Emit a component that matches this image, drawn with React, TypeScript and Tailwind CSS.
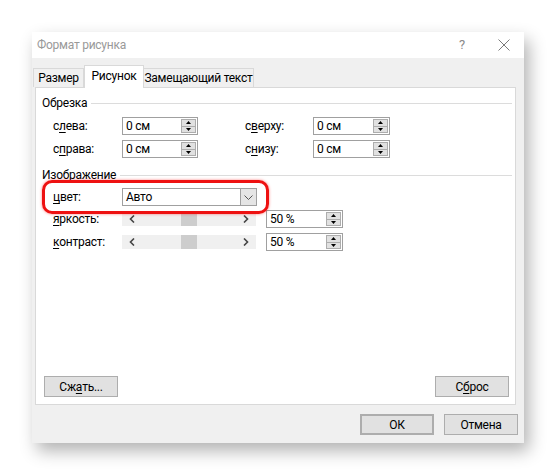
import React from "react";

const U = ({ children }: { children: React.ReactNode }) => (
  <span className="underline underline-offset-2">{children}</span>
);

function Spin({ value, w }: { value: string; w: string }) {
  return (
    <div className={`flex h-[18px] ${w} border border-[#a0a0a0] bg-white`}>
      <div className="flex-1 pl-[3px] leading-[16px] text-[12px] text-black">{value}</div>
      <div className="flex w-[16px] flex-col bg-white py-[1px] pr-[1px]">
        <div className="flex flex-1 items-center justify-center border border-[#adadad] bg-[#e1e1e1]">
          <svg width="5" height="3" viewBox="0 0 5 3"><path d="M2.5 0L5 3H0z" fill="#000" /></svg>
        </div>
        <div className="flex flex-1 items-center justify-center border border-t-0 border-[#adadad] bg-[#e1e1e1]">
          <svg width="5" height="3" viewBox="0 0 5 3"><path d="M0 0h5L2.5 3z" fill="#000" /></svg>
        </div>
      </div>
    </div>
  );
}

function Slider() {
  return (
    <div className="flex h-[14px] w-[134px] items-center bg-[#f0f0f0]">
      <div className="flex w-[20px] justify-center">
        <svg width="6" height="8" viewBox="0 0 6 8"><path d="M5 0.5L1.5 4L5 7.5" stroke="#444" strokeWidth="1.6" fill="none" /></svg>
      </div>
      <div className="flex-1" />
      <div className="h-[14px] w-[16px] bg-[#cdcdcd]" />
      <div className="flex-1" />
      <div className="flex w-[20px] justify-center">
        <svg width="6" height="8" viewBox="0 0 6 8"><path d="M1 0.5L4.5 4L1 7.5" stroke="#444" strokeWidth="1.6" fill="none" /></svg>
      </div>
    </div>
  );
}

function Btn({ children, className = "" }: { children: React.ReactNode; className?: string }) {
  return (
    <div className={`flex h-[21px] w-[74px] items-center justify-center border-[#adadad] bg-[#e1e1e1] text-[12px] text-black ${className}`}>
      {children}
    </div>
  );
}

export default function App() {
  return (
    <div
      className="h-[475px] w-[556px] whitespace-nowrap bg-white pl-[32px] pt-[32px] tracking-[-0.25px]"
      style={{ fontFamily: 'Roboto, "Noto Sans", sans-serif' }}
    >
      <div className="flex h-[411px] w-[492px] flex-col bg-[#f0f0f0] shadow-[5px_8px_16px_rgba(0,0,0,0.3)]">
        {/* title bar */}
        <div className="flex h-[26px] items-center bg-white pl-[5px] pr-[14px] text-[12px] text-[#999999]">
          <div className="flex-1">Формат рисунка</div>
          <div className="mr-[33px] text-[13px] text-[#8a8a8a]">?</div>
          <svg width="12" height="12" viewBox="0 0 12 12"><path d="M0.5 0.5L11.5 11.5M11.5 0.5L0.5 11.5" stroke="#7a7a7a" strokeWidth="1" /></svg>
        </div>
        {/* tabs */}
        <div className="mt-[7px] flex h-[22px] items-end pl-[1px]">
          <div className="flex h-[19px] w-[51px] items-center justify-center border border-b-0 border-[#d9d9d9] bg-[#f0f0f0] text-[12px] text-black">Размер</div>
          <div className="relative z-10 -mb-[1px] flex h-[23px] w-[60px] items-center justify-center border border-b-0 border-[#d9d9d9] bg-white pb-[2px] text-[12px] text-black">Рисунок</div>
          <div className="flex h-[19px] w-[110px] items-center justify-center border border-b-0 border-l-0 border-[#d9d9d9] bg-[#f0f0f0] text-[12px] text-black">Замещающий текст</div>
        </div>
        {/* panel */}
        <div className="relative ml-[3px] flex h-[318px] w-[481px] flex-col border border-[#d9d9d9] bg-white text-[12px] text-black">
          <div className="mt-[6px] flex h-[18px] items-center pl-[6px] pr-[3px]">
            <span>Обрезка</span>
            <div className="ml-[4px] h-px flex-1 bg-[#dcdcdc]" />
          </div>
          <div className="mt-[5px] flex flex-col gap-[5px] pl-[17px]">
            <div className="flex items-center">
              <div className="w-[69px]">с<U>л</U>ева:</div>
              <Spin value="0 см" w="w-[76px]" />
              <div className="ml-[47px] w-[68px]">с<U>в</U>ерху:</div>
              <Spin value="0 см" w="w-[77px]" />
            </div>
            <div className="flex items-center">
              <div className="w-[69px]">с<U>п</U>рава:</div>
              <Spin value="0 см" w="w-[76px]" />
              <div className="ml-[47px] w-[68px]">с<U>н</U>изу:</div>
              <Spin value="0 см" w="w-[77px]" />
            </div>
          </div>
          <div className="mt-[8px] flex h-[18px] items-center pl-[6px] pr-[3px]">
            <span>Изображение</span>
            <div className="ml-[4px] h-px flex-1 bg-[#dcdcdc]" />
          </div>
          <div className="mt-[4px] flex flex-col pl-[17px]">
            <div className="flex items-center">
              <div className="w-[69px]"><U>ц</U>вет:</div>
              <div className="flex h-[18px] w-[135px] border border-[#a0a0a0] bg-white">
                <div className="flex-1 pl-[3px] leading-[16px]">Авто</div>
                <div className="flex w-[16px] items-center justify-center border-l border-[#a0a0a0] bg-[#e5e5e5]">
                  <svg width="9" height="5" viewBox="0 0 9 5"><path d="M0.5 0.5L4.5 4.5L8.5 0.5" stroke="#555" strokeWidth="1" fill="none" /></svg>
                </div>
              </div>
            </div>
            <div className="mt-[4px] flex items-center">
              <div className="w-[69px]"><U>я</U>ркость:</div>
              <Slider />
              <div className="ml-[10px]"><Spin value="50 %" w="w-[77px]" /></div>
            </div>
            <div className="mt-[5px] flex items-center">
              <div className="w-[69px]"><U>к</U>онтраст:</div>
              <Slider />
              <div className="ml-[10px]"><Spin value="50 %" w="w-[77px]" /></div>
            </div>
          </div>
          <div className="flex-1" />
          <div className="mb-[7px] flex justify-between pl-[8px] pr-[6px]">
            <Btn className="border">Сж<U>а</U>ть...</Btn>
            <Btn className="border">С<U>б</U>рос</Btn>
          </div>
          {/* red highlight annotation */}
          <div className="pointer-events-none absolute left-[6px] top-[92px] h-[34px] w-[227px] rounded-[10px] border-[3px] border-[#ee1111] shadow-[0_0_3px_rgba(255,0,0,0.5)]" />
        </div>
        {/* footer */}
        <div className="mt-[9px] flex justify-end gap-[10px] pr-[6px]">
          <Btn className="border-2 border-[#0078d7]">ОК</Btn>
          <Btn className="border">Отмена</Btn>
        </div>
      </div>
    </div>
  );
}
